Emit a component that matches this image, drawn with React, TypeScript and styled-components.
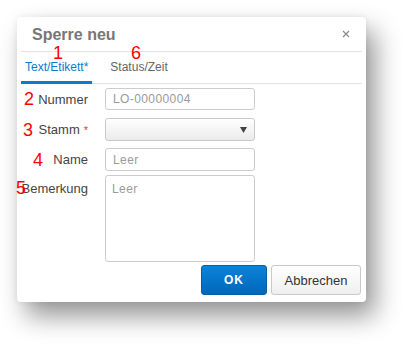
import React from "react";
import styled, { createGlobalStyle } from "styled-components";

const Global = createGlobalStyle`
  html, body { margin: 0; padding: 0; background: #ffffff; }
  body { font-family: "Liberation Sans", Arial, sans-serif; }
  * { box-sizing: border-box; }
`;

const Page = styled.div`
  padding: 17px;
  width: 415px;
  height: 350px;
  overflow: hidden;
`;

const Dialog = styled.div`
  position: relative;
  width: 349px;
  height: 285px;
  background: #ffffff;
  border-radius: 4px;
  box-shadow: 9px 14px 26px rgba(0, 0, 0, 0.42), 0 0 6px rgba(0, 0, 0, 0.07);
  display: flex;
  flex-direction: column;
`;

const Header = styled.div`
  height: 35px;
  margin: 0 4px;
  padding: 2px 12px 0 11px;
  display: flex;
  align-items: center;
  justify-content: space-between;
  border-bottom: 1px solid #e2e2e2;
`;

const Title = styled.div`
  font-size: 16px;
  font-weight: bold;
  color: #777777;
`;

const Close = styled.button`
  border: 0;
  background: transparent;
  padding: 0;
  width: 8px;
  height: 8px;
  display: flex;
  margin-top: -2px;
`;

const TabBar = styled.div`
  height: 32px;
  margin: 0 4px;
  display: flex;
  gap: 14px;
  border-bottom: 1px solid #e2e2e2;
`;

const Tab = styled.div<{ $active?: boolean }>`
  height: 32px;
  padding: 1px 4px 0 4px;
  margin-bottom: -1px;
  display: flex;
  align-items: center;
  font-size: 12px;
  color: ${(p) => (p.$active ? "#0a7ccf" : "#666666")};
  border-bottom: 3px solid ${(p) => (p.$active ? "#0a7ccf" : "transparent")};
`;

const Form = styled.div`
  padding: 4px 0 0 0;
  display: flex;
  flex-direction: column;
`;

const Row = styled.div<{ $top: number; $alignTop?: boolean }>`
  display: flex;
  align-items: ${(p) => (p.$alignTop ? "flex-start" : "center")};
  margin-top: ${(p) => p.$top}px;
  gap: 17px;
`;

const Label = styled.div<{ $padTop?: number }>`
  width: 71px;
  text-align: right;
  font-size: 13px;
  line-height: 15px;
  color: #444444;
  white-space: nowrap;
  padding-top: ${(p) => p.$padTop ?? 0}px;
`;

const Req = styled.span`
  color: #e0403a;
  font-size: 11px;
  margin-left: 4px;
`;

const Field = styled.div<{ $h: number }>`
  width: 150px;
  height: ${(p) => p.$h}px;
  border: 1px solid #cccccc;
  border-radius: 3px;
  background: #ffffff;
  font-size: 12px;
  letter-spacing: 0.4px;
  color: #9a9a9a;
  padding: 0 7px;
  display: flex;
  align-items: center;
`;

const Area = styled(Field)`
  align-items: flex-start;
  padding: 6px 6px;
`;

const Select = styled.div`
  width: 150px;
  height: 23px;
  border: 1px solid #c8c8c8;
  border-radius: 3px;
  background: linear-gradient(#ffffff, #ebebeb);
  display: flex;
  align-items: center;
  justify-content: flex-end;
  padding-right: 7px;
`;

const Footer = styled.div`
  margin-top: 3px;
  padding-right: 5px;
  display: flex;
  justify-content: flex-end;
  gap: 4px;
`;

const Button = styled.button<{ $primary?: boolean }>`
  height: 30px;
  width: ${(p) => (p.$primary ? 66 : 90)}px;
  border-radius: 3px;
  font-family: "Liberation Sans", Arial, sans-serif;
  font-size: ${(p) => (p.$primary ? 12 : 13)}px;
  font-weight: ${(p) => (p.$primary ? "bold" : "normal")};
  letter-spacing: ${(p) => (p.$primary ? "1px" : "0")};
  color: ${(p) => (p.$primary ? "#ffffff" : "#333333")};
  border: 1px solid ${(p) => (p.$primary ? "#0660a6" : "#c9c9c9")};
  background: ${(p) =>
    p.$primary
      ? "linear-gradient(#0a83da, #0067bb)"
      : "linear-gradient(#ffffff, #efefef)"};
  padding: 0;
`;

const Note = styled.div<{ $x: number; $y: number }>`
  position: absolute;
  left: ${(p) => p.$x}px;
  top: ${(p) => p.$y}px;
  font-size: 18px;
  line-height: 18px;
  color: #ff0000;
  pointer-events: none;
`;

export default function App() {
  return (
    <Page>
      <Global />
      <Dialog>
        <Header>
          <Title>Sperre neu</Title>
          <Close aria-label="close">
            <svg width="8" height="8" viewBox="0 0 8 8">
              <path d="M1 1 L7 7 M7 1 L1 7" stroke="#8a8a8a" strokeWidth="1.2" />
            </svg>
          </Close>
        </Header>
        <TabBar>
          <Tab $active>Text/Etikett*</Tab>
          <Tab>Status/Zeit</Tab>
        </TabBar>
        <Form>
          <Row $top={0}>
            <Label>Nummer</Label>
            <Field $h={22}>LO-00000004</Field>
          </Row>
          <Row $top={8}>
            <Label>
              Stamm<Req>*</Req>
            </Label>
            <Select>
              <svg width="7" height="6" viewBox="0 0 7 6">
                <path d="M0 0 H7 L3.5 6 Z" fill="#444444" />
              </svg>
            </Select>
          </Row>
          <Row $top={7}>
            <Label>Name</Label>
            <Field $h={23}>Leer</Field>
          </Row>
          <Row $top={4} $alignTop>
            <Label $padTop={6}>Bemerkung</Label>
            <Area $h={87}>Leer</Area>
          </Row>
        </Form>
        <Footer>
          <Button $primary>OK</Button>
          <Button>Abbrechen</Button>
        </Footer>
        <Note $x={36} $y={27}>1</Note>
        <Note $x={114} $y={27}>6</Note>
        <Note $x={7} $y={73}>2</Note>
        <Note $x={6} $y={104}>3</Note>
        <Note $x={16} $y={134}>4</Note>
        <Note $x={-1} $y={162}>5</Note>
      </Dialog>
    </Page>
  );
}
